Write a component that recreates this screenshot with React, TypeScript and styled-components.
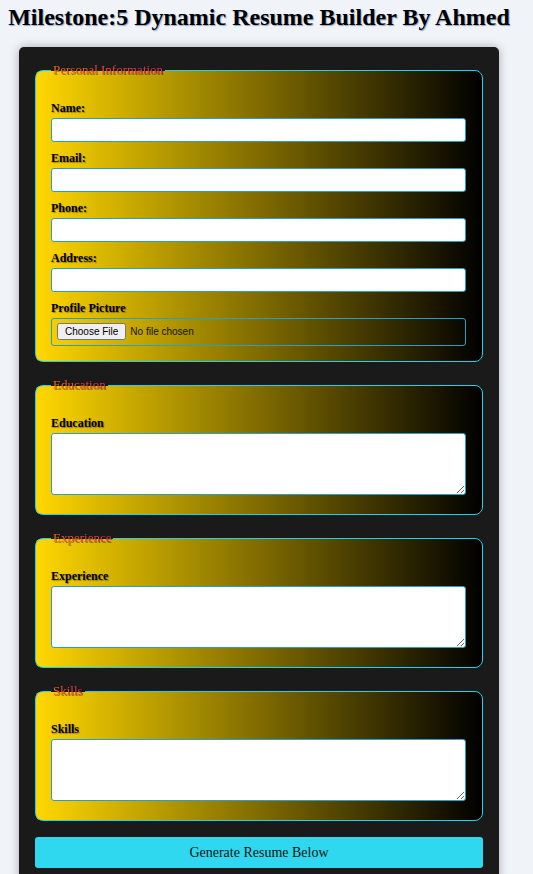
import styled, { createGlobalStyle } from "styled-components";

const GlobalStyle = createGlobalStyle`
  body {
    margin: 0;
    padding: 0 23px 20px 8px;
    background-color: #f0f3f8;
    font-family: "Liberation Serif", "Times New Roman", serif;
  }
`;

type SectionType = {
  legend: string;
  fields: { label: string; kind: "text" | "email" | "tel" | "file" | "area" }[];
};

const sections: SectionType[] = [
  {
    legend: "Personal Information",
    fields: [
      { label: "Name:", kind: "text" },
      { label: "Email:", kind: "email" },
      { label: "Phone:", kind: "tel" },
      { label: "Address:", kind: "text" },
      { label: "Profile Picture", kind: "file" },
    ],
  },
  { legend: "Education", fields: [{ label: "Education", kind: "area" }] },
  { legend: "Experience", fields: [{ label: "Experience", kind: "area" }] },
  { legend: "Skills", fields: [{ label: "Skills", kind: "area" }] },
];

const App = () => {
  return (
    <>
      <GlobalStyle />
      <Title>Milestone:5 Dynamic Resume Builder By Ahmed</Title>
      <FormWrapper>
        {sections.map((section) => (
          <Section key={section.legend}>
            <Legend>{section.legend}</Legend>
            {section.fields.map((field) => (
              <div key={field.label}>
                <Label>{field.label}</Label>
                {field.kind === "area" ? (
                  <TextArea />
                ) : field.kind === "file" ? (
                  <FileInput type="file" />
                ) : (
                  <TextInput type={field.kind} />
                )}
              </div>
            ))}
          </Section>
        ))}
        <SubmitButton type="button">Generate Resume Below</SubmitButton>
      </FormWrapper>
    </>
  );
};

const Title = styled.h1`
  margin: 0;
  padding-top: 2px;
  text-align: center;
  white-space: nowrap;
  font-size: 24px;
  line-height: 30px;
  color: #000;
  text-shadow: 1px 1px 1px #8ea6c4;
`;

const FormWrapper = styled.div`
  box-sizing: border-box;
  width: 480px;
  margin: 15px auto 0;
  padding: 16px;
  background-color: #1a1a1a;
  border-radius: 5px;
  box-shadow: 0 0 10px rgba(0, 0, 0, 0.3);
`;

const Section = styled.fieldset`
  margin: 0 0 16px;
  padding: 0 16px 15px 15px;
  border: 1px solid #1fd3ee;
  border-radius: 8px;
  background: linear-gradient(to right, #ffd700, #000);
`;

const Legend = styled.legend`
  padding: 0 2px;
  font-size: 13px;
  line-height: 14px;
  background: linear-gradient(to right, #ff6a10, #e0206a);
  -webkit-background-clip: text;
  background-clip: text;
  color: transparent;
  filter: drop-shadow(1px 1px 0 rgba(0, 0, 0, 0.45));
  margin-bottom: 15px;
`;

const Label = styled.label`
  display: block;
  margin: 10px 0 3px;
  font-size: 12px;
  line-height: 13px;
  font-weight: bold;
  color: #000;
  text-shadow: 1px 1px 1px rgba(0, 0, 0, 0.35);
`;

const TextInput = styled.input`
  display: block;
  box-sizing: border-box;
  width: 100%;
  height: 24px;
  padding: 4px;
  border: 1px solid #2a9fc6;
  border-radius: 3px;
  background: #fff;
  outline: none;
`;

const FileInput = styled.input`
  display: block;
  box-sizing: border-box;
  width: 100%;
  height: 28px;
  padding: 4px 5px;
  border: 1px solid #2a9fc6;
  border-radius: 3px;
  background: transparent;
  font-family: "Liberation Sans", Arial, sans-serif;
  font-size: 10px;
  color: #111;
`;

const TextArea = styled.textarea`
  display: block;
  box-sizing: border-box;
  width: 100%;
  height: 62px;
  margin-bottom: 4px;
  border: 1px solid #2a9fc6;
  border-radius: 3px;
  background: #fff;
  outline: none;
`;

const SubmitButton = styled.button`
  display: block;
  width: 100%;
  height: 31px;
  border: none;
  border-radius: 3px;
  background-color: #2fd8ee;
  font-family: "Liberation Serif", "Times New Roman", serif;
  font-size: 14px;
  color: #111;
`;

export default App;
